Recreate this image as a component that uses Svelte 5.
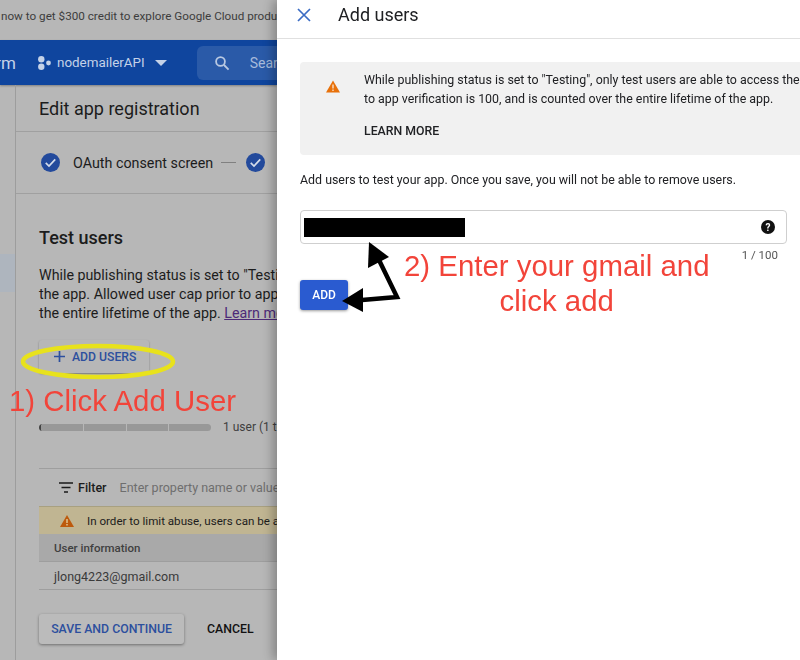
<script>
  const segments = [1, 2, 3, 4];
</script>

<div class="page">
  <section class="behind">
    <div class="banner">now to get $300 credit to explore Google Cloud products</div>
    <header class="topbar">
      <span class="brand">rm</span>
      <svg class="hub" width="13" height="14" viewBox="0 0 13 14"><circle cx="3.3" cy="3.3" r="3.2"/><circle cx="3.3" cy="10.7" r="3.2"/><circle cx="10.5" cy="7" r="2.4"/></svg>
      <span class="project">nodemailerAPI</span>
      <svg class="caret" width="12" height="6" viewBox="0 0 12 6"><path d="M0 0h12L6 6z"/></svg>
      <div class="search">
        <svg width="16" height="16" viewBox="0 0 16 16" fill="none" stroke="#b9c9e2" stroke-width="1.8"><circle cx="6.5" cy="6.5" r="4.4"/><path d="M10 10l4.6 4.6"/></svg>
        <span>Search products</span>
      </div>
    </header>
    <div class="body">
      <aside class="rail"><div class="rail-sel"></div></aside>
      <main class="main">
        <h1 class="title">Edit app registration</h1>
        <div class="stepper">
          <svg class="check" width="19" height="19" viewBox="0 0 20 20"><circle cx="10" cy="10" r="10" fill="#234a9c"/><path d="M5 10.5l3.4 3.2L15 6.8" fill="none" stroke="#d5dcea" stroke-width="1.8"/></svg>
          <span class="step">OAuth consent screen</span>
          <span class="dash"></span>
          <svg class="check" width="19" height="19" viewBox="0 0 20 20"><circle cx="10" cy="10" r="10" fill="#234a9c"/><path d="M5 10.5l3.4 3.2L15 6.8" fill="none" stroke="#d5dcea" stroke-width="1.8"/></svg>
          <span class="step later">Scopes</span>
        </div>
        <h2 class="section">Test users</h2>
        <p class="para">While publishing status is set to "Testing", only test users<br />the app. Allowed user cap prior to app verification is 100,<br />the entire lifetime of the app. <a href="#learn">Learn more</a></p>
        <button class="add-users"><svg width="13" height="13" viewBox="0 0 13 13"><path d="M6.5 1v11M1 6.5h11" stroke="#2c4f9e" stroke-width="1.7"/></svg>ADD USERS</button>
        <div class="quota">
          <div class="bar">
            {#each segments as s (s)}<span class="seg"></span>{/each}
          </div>
          <span class="quota-text">1 user (1 test, 0 other)</span>
        </div>
        <div class="filter">
          <svg width="14" height="11" viewBox="0 0 14 11"><path d="M0 1h14M2.5 5.5h9M5 10h4" stroke="#1a1a1a" stroke-width="1.7"/></svg>
          <b>Filter</b>
          <span>Enter property name or value</span>
        </div>
        <div class="notice">
          <svg width="14" height="12" viewBox="0 0 14 12"><path d="M7 0l7 12H0z" fill="#bd5a0d"/><path d="M7 4v4M7 9v1.5" stroke="#e6d6a8" stroke-width="1.3"/></svg>
          <span>In order to limit abuse, users can be added</span>
        </div>
        <div class="th">User information</div>
        <div class="td">jlong4223@gmail.com</div>
        <div class="actions">
          <button class="save">SAVE AND CONTINUE</button>
          <button class="cancel">CANCEL</button>
        </div>
      </main>
    </div>
  </section>

  <section class="panel">
    <header class="panel-head">
      <svg width="14" height="14" viewBox="0 0 14 14"><path d="M1 1l12 12M13 1L1 13" stroke="#3b6cc4" stroke-width="1.7"/></svg>
      <h1>Add users</h1>
    </header>
    <div class="panel-body">
      <div class="info">
        <svg class="warn" width="14" height="13" viewBox="0 0 14 12"><path d="M7 0l7 12H0z" fill="#e8710a"/><path d="M7 4v4M7 9v1.5" stroke="#fbe9d8" stroke-width="1.3"/></svg>
        <div class="info-text">
          <p>While publishing status is set to "Testing", only test users are able to access the app. Allowed user cap prior</p>
          <p>to app verification is 100, and is counted over the entire lifetime of the app.</p>
          <strong>LEARN MORE</strong>
        </div>
      </div>
      <p class="hint">Add users to test your app. Once you save, you will not be able to remove users.</p>
      <div class="field">
        <div class="redact"></div>
        <svg width="14" height="14" viewBox="0 0 14 14"><circle cx="7" cy="7" r="7" fill="#111"/><text x="7" y="10.6" text-anchor="middle" class="q">?</text></svg>
      </div>
      <div class="count">1 / 100</div>
      <button class="add">ADD</button>
    </div>
  </section>

  <svg class="marks" width="800" height="660" viewBox="0 0 800 660">
    <ellipse cx="98" cy="361.5" rx="75" ry="15.5" fill="none" stroke="#e8e21c" stroke-width="4.5"/>
    <path d="M379 260L397 297L362 300" fill="none" stroke="#000" stroke-width="4.5"/>
    <path d="M369 242L368 268L389 257z" fill="#000"/>
    <path d="M342 301L363 288L363 312z" fill="#000"/>
  </svg>
  <div class="note one">1) Click Add User</div>
  <div class="note two">2) Enter your gmail and<br />click add</div>
</div>

<style>
  :global(body) { margin: 0; background: #fff; }
  .page {
    position: relative;
    display: flex;
    width: 800px;
    height: 660px;
    overflow: hidden;
    font-family: Roboto, "Liberation Sans", sans-serif;
    filter: blur(0.35px);
  }
  .behind {
    flex: none;
    width: 277px;
    height: 660px;
    overflow: hidden;
    background: #b7b7b7;
    color: #1c1c1c;
    white-space: nowrap;
  }
  .banner {
    height: 40px;
    padding-left: 1px;
    line-height: 32px;
    font-size: 11.7px;
    color: #3d3d3d;
    overflow: hidden;
  }
  .topbar {
    display: flex;
    align-items: center;
    height: 45px;
    background: #0f459e;
    color: #c4d2e8;
    box-shadow: 0 1px 2px rgba(0, 0, 0, 0.3);
  }
  .brand { flex: none; width: 16px; font-size: 17px; overflow: hidden; direction: rtl; }
  .hub { margin-left: 22px; fill: #c4d2e8; flex: none; margin-right: 6px; }
  .project { flex: none; font-size: 13.4px; }
  .caret { fill: #c4d2e8; margin-left: 10px; flex: none; }
  .search {
    display: flex;
    align-items: center;
    gap: 20px;
    flex: none;
    width: 200px;
    height: 34px;
    margin-left: 30px;
    padding-left: 17px;
    border-radius: 6px;
    background: #2a5aa8;
    font-size: 14px;
    color: #a7bbdb;
  }
  .body { display: flex; height: 575px; }
  .rail { position: relative; flex: none; width: 15px; border-right: 1px solid #9d9d9d; }
  .rail-sel { margin-top: 169px; height: 38px; background: #aeb5be; }
  .main { flex: none; width: 500px; }
  .title {
    margin: 0;
    height: 46px;
    padding-left: 23px;
    line-height: 47px;
    font-size: 18px;
    font-weight: 400;
    border-bottom: 1px solid #a0a0a0;
  }
  .stepper {
    display: flex;
    align-items: center;
    height: 61px;
    padding-left: 25px;
    border-bottom: 1px solid #a0a0a0;
  }
  .step { margin-left: 13px; font-size: 14.3px; }
  .dash { width: 15px; height: 1px; margin: 0 10px 0 8px; background: #808080; }
  .later { margin-left: 24px; }
  .section { margin: 32px 0 0 23px; font-size: 18px; font-weight: 500; line-height: 24px; }
  .para { margin: 16px 0 0 23px; font-size: 14.25px; line-height: 19px; }
  .para a { color: #4d2a78; text-decoration: underline; }
  .add-users {
    display: flex;
    align-items: center;
    gap: 6px;
    width: 110px;
    height: 33px;
    margin: 17px 0 0 23px;
    padding: 0 0 0 14px;
    border: 0;
    border-radius: 3px;
    background: #b7b7b7;
    box-shadow: 0 1px 2px rgba(0, 0, 0, 0.35);
    font: 500 12.2px Roboto, sans-serif;
    color: #2c4f9e;
  }
  .quota { display: flex; align-items: center; gap: 12px; margin: 46px 0 0 23px; height: 16px; }
  .bar {
    display: flex;
    gap: 1px;
    width: 172px;
    height: 7px;
    border-radius: 4px;
    overflow: hidden;
    border-left: 2px solid #444;
    box-sizing: border-box;
  }
  .seg { flex: 1; background: #989898; }
  .quota-text { font-size: 12px; color: #3f3f3f; }
  .filter {
    display: flex;
    align-items: center;
    height: 37px;
    margin: 33px 0 0 23px;
    padding-left: 20px;
    border-top: 1px solid #9e9e9e;
    font-size: 12.5px;
  }
  .filter b { margin-left: 5px; font-weight: 500; }
  .filter span { margin-left: 13px; color: #6e6e6e; }
  .notice {
    display: flex;
    align-items: center;
    gap: 13px;
    height: 28px;
    margin-left: 23px;
    padding: 1px 0 0 21px;
    background: #c0b592;
    border-top: 1px solid #a8a080;
    box-sizing: border-box;
    font-size: 11.6px;
  }
  .th, .td {
    box-sizing: border-box;
    height: 28px;
    margin-left: 23px;
    padding-left: 15px;
    border-bottom: 1px solid #9e9e9e;
  }
  .th { background: #a9a9a9; font-size: 11.5px; line-height: 29px; font-weight: 500; color: #404040; }
  .td { font-size: 12.5px; line-height: 30px; color: #3a3a3a; }
  .actions { display: flex; align-items: center; gap: 23px; margin: 24px 0 0 23px; }
  .save {
    width: 145px;
    height: 30px;
    padding: 0;
    border: 0;
    border-radius: 3px;
    background: #bbb;
    box-shadow: 0 1px 3px rgba(0, 0, 0, 0.4);
    font: 500 12.3px Roboto, sans-serif;
    color: #2c4f9e;
  }
  .cancel { padding: 0; border: 0; background: none; font: 500 12.3px Roboto, sans-serif; color: #111; }

  .panel {
    flex: none;
    width: 523px;
    height: 660px;
    background: #fff;
    color: #202124;
    white-space: nowrap;
    box-shadow: -4px 0 10px rgba(0, 0, 0, 0.28);
    z-index: 1;
    overflow: hidden;
  }
  .panel-head {
    display: flex;
    align-items: center;
    box-sizing: border-box;
    height: 39px;
    padding: 0 0 8px 20px;
    border-bottom: 1px solid #e0e0e0;
  }
  .panel-head h1 { margin: 0 0 0 27px; font-size: 18px; font-weight: 400; line-height: 30px; }
  .panel-body { padding: 23px 0 0 23px; }
  .info {
    display: flex;
    width: 560px;
    height: 93px;
    border-radius: 4px;
    background: #f1f1f1;
  }
  .warn { flex: none; margin: 18px 0 0 26px; }
  .info-text { margin-left: 24px; padding-top: 8px; font-size: 12.4px; line-height: 19px; }
  .info-text p { margin: 0; }
  .info-text strong { display: block; margin-top: 14px; font-size: 12.3px; font-weight: 500; }
  .hint { margin: 16px 0 0; font-size: 12.4px; line-height: 18px; }
  .field {
    display: flex;
    align-items: center;
    justify-content: space-between;
    box-sizing: border-box;
    width: 487px;
    height: 34px;
    margin-top: 21px;
    padding: 0 11px 0 3px;
    border: 1px solid #cfcfcf;
    border-radius: 4px;
  }
  .redact { width: 161px; height: 19px; background: #000; }
  .q { fill: #fff; font: 700 10px Roboto, sans-serif; }
  .count { width: 478px; margin-top: 3px; text-align: right; font-size: 11.5px; line-height: 16px; color: #555; }
  .add {
    display: block;
    width: 48px;
    height: 30px;
    margin-top: 17px;
    padding: 0;
    border: 0;
    border-radius: 3px;
    background: #2a5bd0;
    box-shadow: 0 1px 3px rgba(0, 0, 0, 0.4);
    font: 500 12px Roboto, sans-serif;
    color: #fff;
  }

  .marks { position: absolute; left: 0; top: 0; z-index: 2; pointer-events: none; }
  .note {
    position: absolute;
    z-index: 3;
    font-family: "Liberation Sans", Arial, sans-serif;
    font-size: 29.4px;
    line-height: 35px;
    color: #f2443a;
    white-space: nowrap;
  }
  .one { left: 9px; top: 383px; }
  .two { left: 404px; top: 248px; text-align: center; }
</style>
